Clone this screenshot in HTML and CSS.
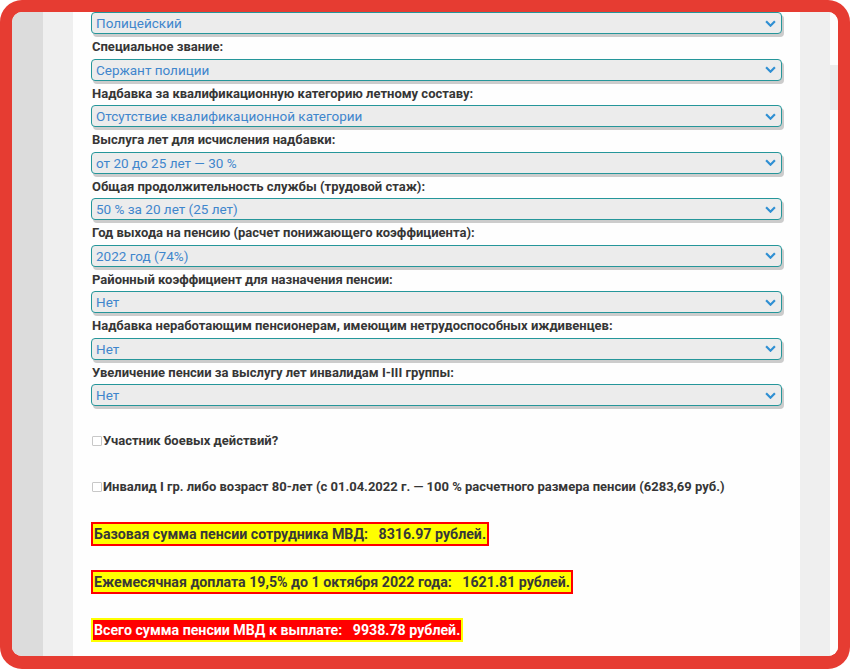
FILE: index.html
```html
<!DOCTYPE html>
<html lang="ru">
<head>
<meta charset="utf-8">
<link rel="stylesheet" href="styles.css">
</head>
<body>
<div class="frame">
  <div class="strip strip-dark"></div>
  <div class="strip strip-light"></div>
  <main class="content">
    <div class="select"><span>Полицейский</span><svg class="chev" viewBox="0 0 10 6" width="11" height="7"><path d="M1 1 L5 5 L9 1" fill="none" stroke="#2f8fd3" stroke-width="2"/></svg></div>
    <div class="label">Специальное звание:</div>
    <div class="select"><span>Сержант полиции</span><svg class="chev" viewBox="0 0 10 6" width="11" height="7"><path d="M1 1 L5 5 L9 1" fill="none" stroke="#2f8fd3" stroke-width="2"/></svg></div>
    <div class="label">Надбавка за квалификационную категорию летному составу:</div>
    <div class="select"><span>Отсутствие квалификационной категории</span><svg class="chev" viewBox="0 0 10 6" width="11" height="7"><path d="M1 1 L5 5 L9 1" fill="none" stroke="#2f8fd3" stroke-width="2"/></svg></div>
    <div class="label">Выслуга лет для исчисления надбавки:</div>
    <div class="select"><span>от 20 до 25 лет — 30 %</span><svg class="chev" viewBox="0 0 10 6" width="11" height="7"><path d="M1 1 L5 5 L9 1" fill="none" stroke="#2f8fd3" stroke-width="2"/></svg></div>
    <div class="label">Общая продолжительность службы (трудовой стаж):</div>
    <div class="select"><span>50 % за 20 лет (25 лет)</span><svg class="chev" viewBox="0 0 10 6" width="11" height="7"><path d="M1 1 L5 5 L9 1" fill="none" stroke="#2f8fd3" stroke-width="2"/></svg></div>
    <div class="label">Год выхода на пенсию (расчет понижающего коэффициента):</div>
    <div class="select"><span>2022 год (74%)</span><svg class="chev" viewBox="0 0 10 6" width="11" height="7"><path d="M1 1 L5 5 L9 1" fill="none" stroke="#2f8fd3" stroke-width="2"/></svg></div>
    <div class="label">Районный коэффициент для назначения пенсии:</div>
    <div class="select"><span>Нет</span><svg class="chev" viewBox="0 0 10 6" width="11" height="7"><path d="M1 1 L5 5 L9 1" fill="none" stroke="#2f8fd3" stroke-width="2"/></svg></div>
    <div class="label">Надбавка неработающим пенсионерам, имеющим нетрудоспособных иждивенцев:</div>
    <div class="select"><span>Нет</span><svg class="chev" viewBox="0 0 10 6" width="11" height="7"><path d="M1 1 L5 5 L9 1" fill="none" stroke="#2f8fd3" stroke-width="2"/></svg></div>
    <div class="label">Увеличение пенсии за выслугу лет инвалидам I-III группы:</div>
    <div class="select"><span>Нет</span><svg class="chev" viewBox="0 0 10 6" width="11" height="7"><path d="M1 1 L5 5 L9 1" fill="none" stroke="#2f8fd3" stroke-width="2"/></svg></div>

    <div class="check first"><span class="box"></span>Участник боевых действий?</div>
    <div class="check"><span class="box"></span>Инвалид I гр. либо возраст 80-лет (с 01.04.2022 г. — 100 % расчетного размера пенсии (6283,69 руб.)</div>

    <div class="result first">Базовая сумма пенсии сотрудника МВД: &nbsp; 8316.97 рублей.</div>
    <div class="result">Ежемесячная доплата 19,5% до 1 октября 2022 года: &nbsp; 1621.81 рублей.</div>
    <div class="result total">Всего сумма пенсии МВД к выплате: &nbsp; 9938.78 рублей.</div>
  </main>
  <div class="strip strip-light"></div>
  <div class="scroll"><div class="thumb"></div></div>
</div>
</body>
</html>
```
FILE: styles.css
```css
html, body {
  margin: 0;
  padding: 0;
  background: #ffffff;
}
body {
  font-family: Roboto, "Open Sans", sans-serif;
  color: #3a3a3a;
}
.frame {
  box-sizing: border-box;
  width: 850px;
  height: 669px;
  border: 12px solid #e63c32;
  border-bottom-width: 13px;
  border-radius: 22px;
  display: flex;
  overflow: hidden;
  background: #fff;
}
.strip { flex: none; }
.strip-dark { width: 31px; background: #dcdcdc; }
.strip-light { width: 30px; background: #efefef; }
.content {
  flex: none;
  width: 727px;
  box-sizing: border-box;
  padding: 0 0 0 18px;
  background: #fefefe;
}
.scroll {
  flex: none;
  width: 8px;
  background: #fdfdfd;
}
.thumb {
  margin-top: 53px;
  height: 45px;
  background: #ececec;
}
.select {
  box-sizing: border-box;
  width: 691px;
  height: 22px;
  border: 1px solid #25969a;
  border-radius: 4px;
  background: #ececec;
  box-shadow: 2px 3px 0 #cccccc;
  display: flex;
  align-items: center;
  justify-content: space-between;
  padding: 0 5px 0 4px;
  font-size: 13.5px;
  color: #3f86cc;
}
.chev { display: block; }
.label {
  font-size: 13px;
  font-weight: 700;
  line-height: 17.5px;
  padding: 4px 0 3px 1px;
  color: #363636;
}
.check {
  display: flex;
  align-items: center;
  font-size: 13px;
  font-weight: 700;
  line-height: 20px;
  margin-top: 26px;
  padding-left: 1px;
  color: #363636;
}
.check.first { margin-top: 25px; }
.box {
  box-sizing: border-box;
  width: 10px;
  height: 10px;
  border: 1px solid #c8c8c8;
  border-radius: 1px;
  background: #fff;
  margin-right: 1px;
}
.result {
  display: table;
  box-sizing: border-box;
  border: 2px solid #ff0000;
  background: #ffff00;
  color: #383838;
  font-size: 14.2px;
  font-weight: 700;
  line-height: 20px;
  padding: 0 1px;
  margin-top: 24px;
}
.result.first { margin-top: 25px; }
.result.total {
  border-color: #ffff00;
  background: #ff0000;
  color: #ffffff;
}
```
